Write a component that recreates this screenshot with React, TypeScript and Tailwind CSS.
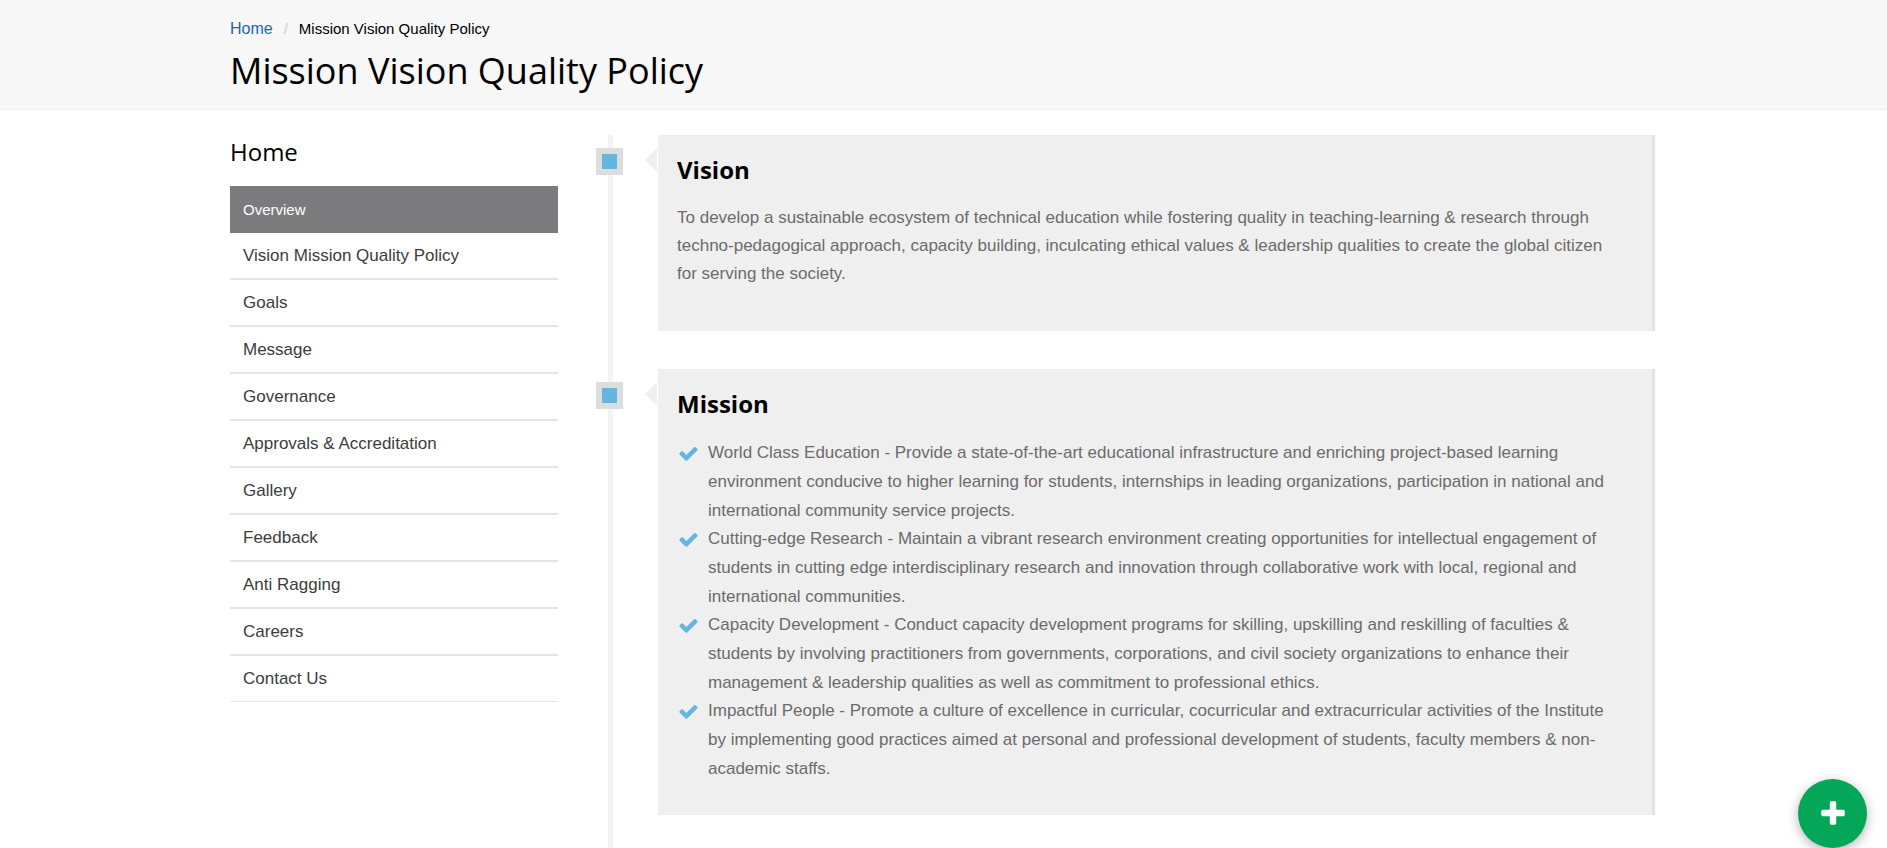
import React from "react";

const navItems: string[] = [
  "Vision Mission Quality Policy",
  "Goals",
  "Message",
  "Governance",
  "Approvals & Accreditation",
  "Gallery",
  "Feedback",
  "Anti Ragging",
  "Careers",
  "Contact Us",
];

const missionPoints: string[] = [
  "World Class Education - Provide a state-of-the-art educational infrastructure and enriching project-based learning environment conducive to higher learning for students, internships in leading organizations, participation in national and international community service projects.",
  "Cutting-edge Research - Maintain a vibrant research environment creating opportunities for intellectual engagement of students in cutting edge interdisciplinary research and innovation through collaborative work with local, regional and international communities.",
  "Capacity Development - Conduct capacity development programs for skilling, upskilling and reskilling of faculties & students by involving practitioners from governments, corporations, and civil society organizations to enhance their management & leadership qualities as well as commitment to professional ethics.",
  "Impactful People - Promote a culture of excellence in curricular, cocurricular and extracurricular activities of the Institute by implementing good practices aimed at personal and professional development of students, faculty members & non-academic staffs.",
];

function CheckIcon() {
  return (
    <svg viewBox="0 0 1792 1792" className="mt-[5px] size-[21px] shrink-0 fill-[#65b5e1]" aria-hidden="true">
      <path d="M1671 566q0 40-28 68l-724 724-136 136q-28 28-68 28t-68-28l-136-136-362-362q-28-28-28-68t28-68l136-136q28-28 68-28t68 28l294 295 656-657q28-28 68-28t68 28l136 136q28 28 28 68z" />
    </svg>
  );
}

function PlusIcon() {
  return (
    <svg viewBox="0 0 1792 1792" className="size-[30px] fill-white" aria-hidden="true">
      <path d="M1600 736v192q0 40-28 68t-68 28h-416v416q0 40-28 68t-68 28h-192q-40 0-68-28t-28-68v-416h-416q-40 0-68-28t-28-68v-192q0-40 28-68t68-28h416v-416q0-40 28-68t68-28h192q40 0 68 28t28 68v416h416q40 0 68 28t28 68z" />
    </svg>
  );
}

function TimelineEntry({ title, children }: { title: string; children: React.ReactNode }) {
  return (
    <section className="flex items-start">
      <div className="relative z-10 mt-[13px] size-[27px] shrink-0 border-6 border-[#dddddd] bg-[#65b5e1]" />
      <svg viewBox="0 0 12 24" className="mt-[13px] mr-px ml-[22px] h-6 w-3 shrink-0 fill-[#efefef]" aria-hidden="true">
        <path d="M12 0v24L0 12z" />
      </svg>
      <div className="min-w-0 flex-1 border-r-3 border-[#e2e2e2] bg-[#efefef] pt-[18px] pr-8 pb-[33px] pl-[19px]">
        <h2 className="mb-[17px] font-['Open_Sans',sans-serif] text-2xl leading-[34px] font-bold text-black">{title}</h2>
        {children}
      </div>
    </section>
  );
}

export default function App() {
  return (
    <div className="bg-white font-['Liberation_Sans',Arial,sans-serif] text-[#6b6b6b]">
      <header className="border-b border-[#efefef] bg-[#f7f7f7]">
        <div className="mx-auto max-w-[1427px] pt-[19px] pr-0.5 pb-[11px]">
          <nav aria-label="Breadcrumb">
            <ol className="flex items-baseline leading-5">
              <li>
                <a href="#" className="text-base leading-5 text-[#1668b8]">Home</a>
              </li>
              <li className="mx-[11px] text-[15px] leading-5 text-[#cccccc]" aria-hidden="true">/</li>
              <li className="text-[15px] leading-5 text-black" aria-current="page">Mission Vision Quality Policy</li>
            </ol>
          </nav>
          <h1 className="mt-[5px] font-['Open_Sans',sans-serif] text-4xl leading-[54px] font-normal text-black">
            Mission Vision Quality Policy
          </h1>
        </div>
      </header>

      <div className="mx-auto flex max-w-[1427px] items-start pt-[25px] pr-0.5">
        <aside className="w-[328px] shrink-0">
          <h2 className="mb-[17px] font-['Open_Sans',sans-serif] text-2xl leading-[34px] text-black">Home</h2>
          <nav aria-label="Section">
            <a href="#" className="block bg-[#7b7b7d] px-[13px] text-[15px] leading-[47px] text-white">Overview</a>
            {navItems.map((item) => (
              <a
                key={item}
                href="#"
                className="block border-b-2 border-[#e5e5e5] px-[13px] text-[17px] leading-[45px] text-[#3c3c3c] last:border-b"
              >
                {item}
              </a>
            ))}
          </nav>
        </aside>

        <main className="relative ml-[38px] min-w-0 flex-1">
          <div className="absolute inset-y-0 left-3 w-[5px] bg-[#f3f3f3]" />
          <div className="flex flex-col gap-[38px] pb-[38px] text-[17px]">
            <TimelineEntry title="Vision">
              <p className="mb-[10px] leading-7">
                To develop a sustainable ecosystem of technical education while fostering quality in teaching-learning &
                research through techno-pedagogical approach, capacity building, inculcating ethical values & leadership
                qualities to create the global citizen for serving the society.
              </p>
            </TimelineEntry>
            <TimelineEntry title="Mission">
              <ul className="pl-px leading-[29px]">
                {missionPoints.map((point) => (
                  <li key={point} className="-mb-px flex gap-[9px]">
                    <CheckIcon />
                    <span>{point}</span>
                  </li>
                ))}
              </ul>
            </TimelineEntry>
          </div>
        </main>
      </div>

      <button
        type="button"
        aria-label="Open menu"
        className="fixed right-5 bottom-0 z-20 flex size-[69px] items-center justify-center rounded-full bg-[#04a657] shadow-[0_3px_12px_rgba(0,0,0,0.3)]"
      >
        <PlusIcon />
      </button>
    </div>
  );
}
